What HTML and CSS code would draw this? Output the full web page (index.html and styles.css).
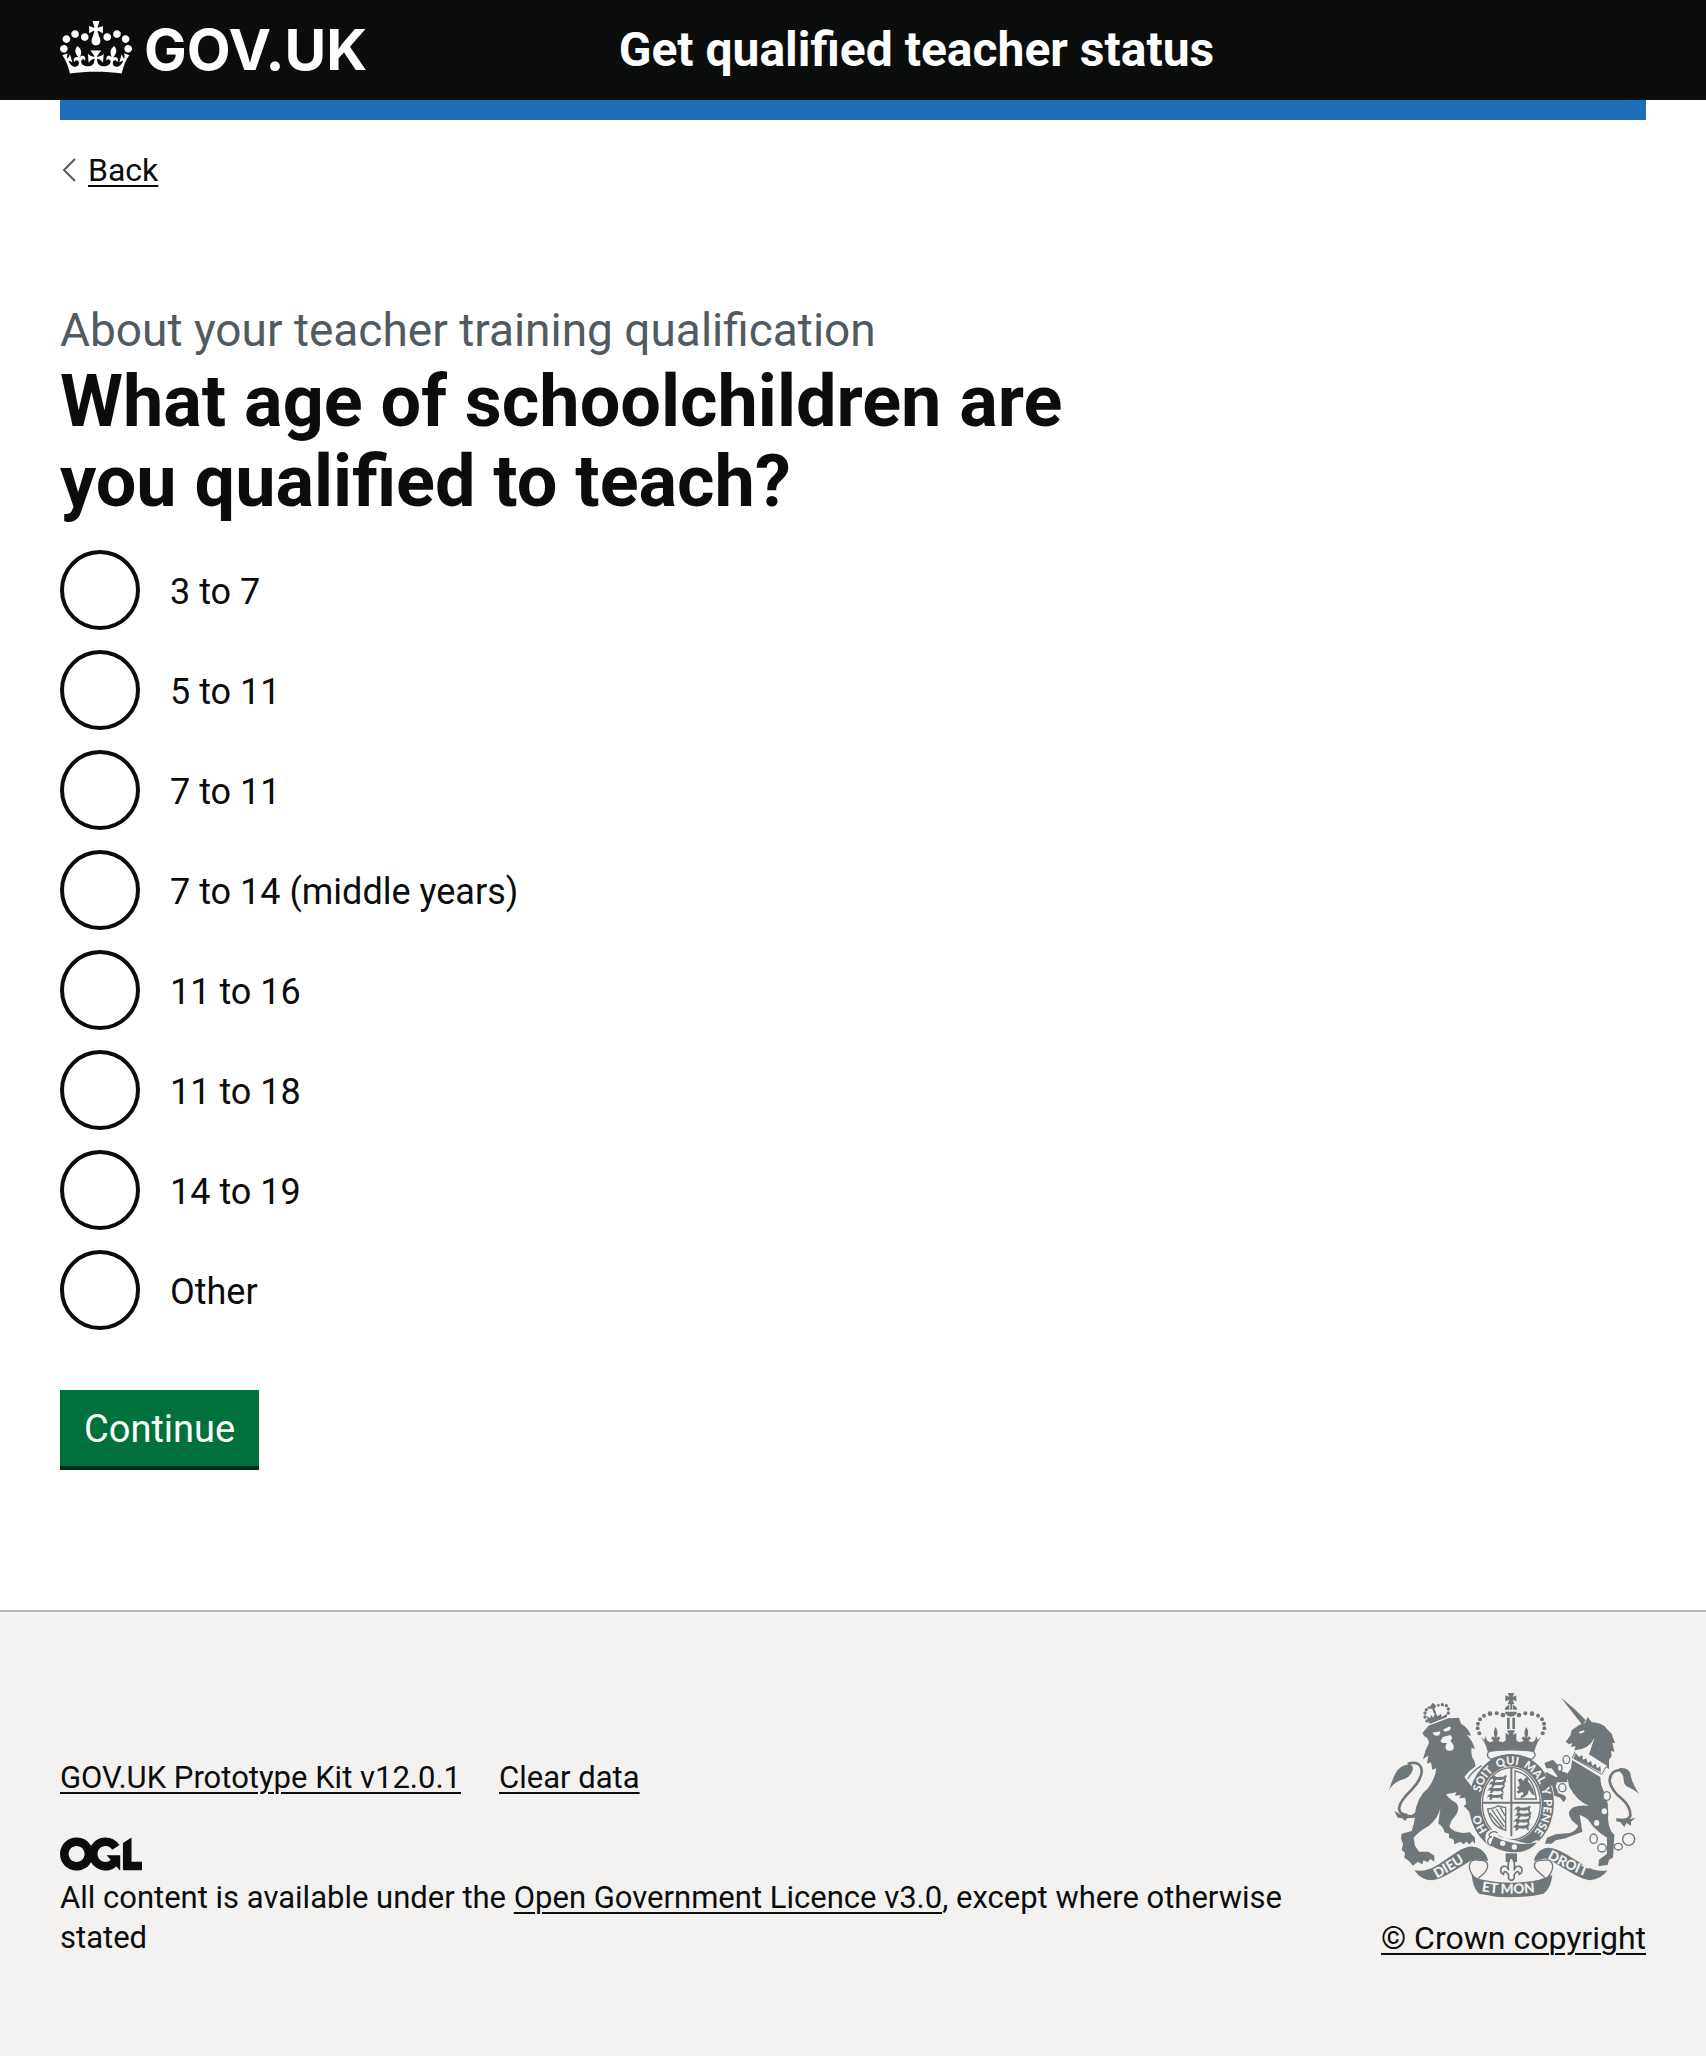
FILE: index.html
```html
<!DOCTYPE html>
<html lang="en">
<head>
<meta charset="utf-8">
<meta name="viewport" content="width=device-width, initial-scale=1">
<title>What age of schoolchildren are you qualified to teach? - Get qualified teacher status</title>
<link rel="stylesheet" href="styles.css">
</head>
<body>
<header class="header">
  <div class="header-row container">
    <a class="logo" href="#">
      <svg class="logo-crown" viewBox="0 0 132 97" aria-hidden="true"><path fill="currentColor" fill-rule="evenodd" d="M25 30.2c3.5 1.5 7.7-.2 9.1-3.7 1.5-3.6-.2-7.8-3.9-9.2-3.6-1.4-7.6.3-9.1 3.9-1.4 3.5.3 7.5 3.9 9zM9 39.5c3.6 1.5 7.8-.2 9.2-3.7 1.5-3.6-.2-7.8-3.9-9.1-3.6-1.5-7.6.2-9.1 3.8-1.4 3.5.3 7.5 3.8 9zM4.4 57.2c3.5 1.5 7.7-.2 9.1-3.8 1.5-3.6-.2-7.7-3.9-9.1-3.5-1.5-7.6.3-9.1 3.8-1.4 3.5.3 7.6 3.9 9.1zm38.3-21.4c3.5 1.5 7.7-.2 9.1-3.8 1.5-3.6-.2-7.7-3.9-9.1-3.6-1.5-7.6.3-9.1 3.8-1.3 3.6.4 7.7 3.9 9.1zm64.4-5.6c-3.6 1.5-7.8-.2-9.1-3.7-1.5-3.6.2-7.8 3.8-9.2 3.6-1.4 7.7.3 9.2 3.9 1.3 3.5-.4 7.5-3.9 9zm15.9 9.3c-3.6 1.5-7.7-.2-9.1-3.7-1.5-3.6.2-7.8 3.7-9.1 3.6-1.5 7.7.2 9.2 3.8 1.5 3.5-.3 7.5-3.8 9zm4.7 17.7c-3.6 1.5-7.8-.2-9.2-3.8-1.5-3.6.2-7.7 3.9-9.1 3.6-1.5 7.7.3 9.2 3.8 1.3 3.5-.4 7.6-3.9 9.1zM89.3 35.8c-3.6 1.5-7.8-.2-9.2-3.8-1.4-3.6.2-7.7 3.9-9.1 3.6-1.5 7.7.3 9.2 3.8 1.4 3.6-.3 7.7-3.9 9.1zM69.7 17.7l8.9 4.7V9.3l-8.9 2.8c-.2-.3-.5-.6-.9-.9L72.4 0H59.6l3.5 11.2c-.3.3-.6.5-.9.9l-8.8-2.8v13.1l8.8-4.7c.3.3.6.7.9.9l-5 15.4v.1c-.2.8-.4 1.6-.4 2.4 0 4.1 3.1 7.5 7 8.1h.2c.3 0 .7.1 1 .1.4 0 .7 0 1-.1h.2c4-.6 7.1-4.1 7.1-8.1 0-.8-.1-1.7-.4-2.4V34l-5.1-15.4c.4-.2.7-.6 1-.9zM66 92.8c16.9 0 32.8 1.1 47.1 3.2 4-16.9 8.9-26.7 14-33.5l-9.6-3.4c1 4.9 1.1 7.2 0 10.2-1.5-1.4-3-4.3-4.2-8.7L108.6 76c2.8-2 5-3.2 7.5-3.3-4.4 9.4-10 11.9-13.6 11.2-4.3-.8-6.3-4.6-5.6-7.9 1-4.7 5.7-5.9 8-.5 4.3-8.7-3-11.4-7.6-8.8 7.1-7.2 7.9-13.5 2.1-21.1-8 6.1-8.1 12.3-4.5 20.8-4.7-5.4-12.1-2.5-9.5 6.2 3.4-5.2 7.9-2 7.2 3.1-.6 4.3-6.4 7.8-13.5 7.2-10.3-.9-10.9-8-11.2-13.8 2.5-.5 7.1 1.8 11 7.3L80.2 60c-4.1 4.4-8 5.3-12.3 5.4 1.4-4.4 8-11.6 8-11.6H55.5s6.4 7.2 7.9 11.6c-4.2-.1-8-1-12.3-5.4l1.4 16.4c3.9-5.5 8.5-7.7 10.9-7.3-.3 5.8-.9 12.8-11.1 13.8-7.2.6-12.9-2.9-13.5-7.2-.7-5 3.8-8.3 7.1-3.1 2.7-8.7-4.6-11.6-9.4-6.2 3.7-8.5 3.6-14.7-4.6-20.8-5.8 7.6-5 13.9 2.2 21.1-4.7-2.6-11.9.1-7.7 8.8 2.3-5.5 7.1-4.2 8.1.5.7 3.3-1.3 7.1-5.7 7.9-3.5.7-9-1.8-13.5-11.2 2.5.1 4.7 1.3 7.5 3.3l-4.7-15.4c-1.2 4.4-2.7 7.2-4.3 8.7-1.1-3-.9-5.3 0-10.2l-9.5 3.4c5 6.9 9.9 16.7 14 33.5 14.8-2.1 30.8-3.2 47.7-3.2z"/></svg>
      <span class="logo-text">GOV.UK</span>
    </a>
    <a class="service-name" href="#">Get qualified teacher status</a>
  </div>
</header>
<div class="container"><div class="header-bar"></div></div>

<div class="container">
  <div class="back">
    <svg class="back-arrow" viewBox="0 0 14 24" aria-hidden="true"><path d="M13 1 2 12l11 11" fill="none" stroke="currentColor" stroke-width="2"/></svg>
    <a class="link" href="#">Back</a>
  </div>

  <main class="main">
    <form action="#" method="post">
      <fieldset class="fieldset">
        <legend class="legend">
          <span class="caption">About your teacher training qualification</span>
          <h1 class="heading">What age of schoolchildren are you qualified to teach?</h1>
        </legend>
        <div class="radios">
          <div class="radio"><input class="radio-input" type="radio" name="age" id="age-1" value="3-7"><label class="radio-label" for="age-1">3 to 7</label></div>
          <div class="radio"><input class="radio-input" type="radio" name="age" id="age-2" value="5-11"><label class="radio-label" for="age-2">5 to 11</label></div>
          <div class="radio"><input class="radio-input" type="radio" name="age" id="age-3" value="7-11"><label class="radio-label" for="age-3">7 to 11</label></div>
          <div class="radio"><input class="radio-input" type="radio" name="age" id="age-4" value="7-14"><label class="radio-label" for="age-4">7 to 14 (middle years)</label></div>
          <div class="radio"><input class="radio-input" type="radio" name="age" id="age-5" value="11-16"><label class="radio-label" for="age-5">11 to 16</label></div>
          <div class="radio"><input class="radio-input" type="radio" name="age" id="age-6" value="11-18"><label class="radio-label" for="age-6">11 to 18</label></div>
          <div class="radio"><input class="radio-input" type="radio" name="age" id="age-7" value="14-19"><label class="radio-label" for="age-7">14 to 19</label></div>
          <div class="radio"><input class="radio-input" type="radio" name="age" id="age-8" value="other"><label class="radio-label" for="age-8">Other</label></div>
        </div>
      </fieldset>
      <button class="button" type="submit">Continue</button>
    </form>
  </main>
</div>

<footer class="footer">
  <div class="footer-row container">
    <div class="footer-meta">
      <ul class="footer-links">
        <li><a class="link" href="#">GOV.UK Prototype Kit v12.0.1</a></li>
        <li><a class="link" href="#">Clear data</a></li>
      </ul>
      <svg class="ogl" viewBox="0 0 483.2 195.7" aria-hidden="true"><path fill="currentColor" d="M421.5 142.8V.1l-50.7 32.3v161.1h112.4v-50.7zm-122.3-9.6A47.12 47.12 0 0 1 221 97.8c0-26 21.1-47.1 47.1-47.1 16.7 0 31.4 8.7 39.7 21.8l42.7-27.2A97.63 97.63 0 0 0 268.1 0c-36.5 0-68.3 20.1-85.1 49.7A98 98 0 0 0 97.8 0C43.9 0 0 43.9 0 97.8s43.9 97.8 97.8 97.8c36.5 0 68.3-20.1 85.1-49.7a97.76 97.76 0 0 0 149.6 25.4l19.4 22.2h3v-87.8h-80l24.3 27.5zM97.8 145c-26 0-47.1-21.1-47.1-47.1s21.1-47.1 47.1-47.1 47.1 21.1 47.1 47.1S123.8 145 97.8 145"/></svg>
      <p class="licence">All content is available under the <a class="link" href="#">Open Government Licence v3.0</a>, except where otherwise stated</p>
    </div>
    <div class="copyright">
      <svg class="crest" viewBox="60 30 750 621" role="img" aria-label="Royal coat of arms">
        <defs>
          <path id="garter-line" d="M427 486A97 117 0 0 1 427 251A97 117 0 0 1 427 486"/>
          <path id="dieu-line" d="M203 592Q255 565 310 527"/>
          <path id="mon-line" d="M338 631Q426 646 530 629"/>
          <path id="droit-line" d="M534 532Q592 564 670 594"/>
          <g id="beast"><path d="M3 5l8-3 6 4 20-1 6-5 5 3-4 7 2 10-6-2-2-5-8 2-14-1-5 6-7 1 3-6-3-4-7 3z"/></g>
        </defs>

        <!-- crown -->
        <g class="crest-fill">
          <path d="M416 36h20l-5 12 11-5v18l-11-5 5 14h-20l5-14-12 5V43l12 5zM424 70h5v16h-5z"/>
          <path d="M421 72v14h-14q2-11 14-14zM431 72v14h14q-2-11-14-14zM408 92h36q-3 14-18 15-15-1-18-15z"/>
          <path d="M414 110h8v34h-8zM430 110h8v34h-8z"/>
          <circle cx="402" cy="102" r="7"/><circle cx="383" cy="97" r="6"/><circle cx="363" cy="98" r="7"/><circle cx="345" cy="104" r="6"/><circle cx="333" cy="115" r="6"/><circle cx="327" cy="128" r="6"/><circle cx="326" cy="142" r="6"/><circle cx="331" cy="157" r="6"/>
          <circle cx="450" cy="102" r="7"/><circle cx="469" cy="97" r="6"/><circle cx="489" cy="98" r="7"/><circle cx="507" cy="104" r="6"/><circle cx="519" cy="115" r="6"/><circle cx="525" cy="128" r="6"/><circle cx="526" cy="142" r="6"/><circle cx="521" cy="157" r="6"/>
          <path d="M334 168L346 176 350 166 354 178 362 184 374 180 366 172 372 166 378 172Q370 152 380 138 390 152 382 172L388 166 394 172 388 180 402 184 410 178 410 156 421 162 414 148H438L431 162 442 156 442 178 450 184 464 180 458 172 464 166 470 172Q462 152 472 138 482 152 474 172L480 166 486 172 478 180 490 184 498 178 502 166 506 176 518 168Q502 184 496 212 427 203 356 212 350 184 334 168Z"/>
        </g>
        <path class="crest-line" d="M362 210q64-9 128 0 10 5 8 13-2 8-11 12-60-25-121 0-10-5-11-13 1-8 7-12z"/>

        <!-- garter and shield -->
        <path class="crest-fill" fill-rule="evenodd" d="M427 219A128 148 0 0 1 427 515A128 148 0 0 1 427 219ZM427 256A91 112 0 0 0 427 480A91 112 0 0 0 427 256Z"/>
        <ellipse class="crest-line" cx="427" cy="368" rx="87" ry="108"/>
        <path class="crest-line crest-line-thick" d="M427 260v206M340 365h174"/>
        <g class="crest-fill">
          <use href="#beast" x="366" y="282"/><use href="#beast" x="362" y="298"/><use href="#beast" x="358" y="316"/><use href="#beast" x="356" y="336"/>
          <use href="#beast" x="438" y="374"/><use href="#beast" x="440" y="392"/><use href="#beast" x="436" y="410"/><use href="#beast" x="434" y="428"/>
          <path d="M446 296l10-4 8 8 4-10 12 2-4 8 8 10 8 14 6 20-10-6-8-12-4 14-10 8-12 4 2-8 8-4-4-8-12 6-6-6 8-4-6-10 8-4-2-10z"/>
        </g>
        <path class="crest-line" d="M438 270q56 10 64 84h-64z"/>
        <path class="crest-line" d="M356 384q20-2 30-9l24 5v68q-44-12-54-64zM368 386l38 52M382 384l26 40M394 380l14 24M362 396l40 48"/>
        <g class="crest-motto crest-motto-small">
          <text><textPath href="#garter-line" startOffset="84">HO</textPath></text>
          <text><textPath href="#garter-line" startOffset="203">SOIT</textPath></text>
          <text><textPath href="#garter-line" startOffset="295">QUI</textPath></text>
          <text><textPath href="#garter-line" startOffset="374">MAL</textPath></text>
          <text><textPath href="#garter-line" startOffset="460">Y</textPath></text>
          <text><textPath href="#garter-line" startOffset="493">PENSE</textPath></text>
        </g>
        <path class="crest-bare" d="M352 455q14-14 34-8-4 12 6 20l80 20q14 2 30-10l22 8q-40 42-96 38-44-2-70-32-14-10-6-36z"/>
        <path class="crest-fill" d="M374 466q70 34 130 18-24 32-76 30-34-2-64-22z"/>
        <path class="crest-line" d="M382 480a13 13 0 1 1-14-12q-14-4-4-12 10-8 22 0"/>
        <circle class="crest-bare" cx="401" cy="487" r="8"/><circle class="crest-bare" cx="436" cy="498" r="8"/>

        <!-- lion -->
        <path class="crest-line" d="M338 254Q312 268 296 294"/>
        <g class="crest-fill">
          <path d="M160 156L178 136 245 112 270 110 276 128Q298 140 306 164L294 162Q312 182 318 204L308 200Q304 224 316 240L320 256Q300 268 286 288L304 312Q326 340 332 380L338 392 328 396 316 390 314 396 304 388 302 394 290 380 284 376 292 368 288 350 270 352 276 342 258 344 262 334 232 340Q236 352 262 366Q276 384 256 408Q242 424 242 438 252 454 284 456L302 454 318 470 318 488 310 480 302 490 292 482 284 490 274 482 256 490 254 476 240 470 240 458 226 454Q224 436 208 428L214 382Q206 414 180 434Q148 452 134 470L138 494 150 512 178 512 196 524 196 542 184 534 176 544 164 538 160 550 146 542 132 554 120 540 106 530 108 516 98 506 102 490 96 472 98 458 128 450Q138 422 138 400Q142 350 178 320Q200 290 202 262L190 266 186 244 174 248 178 224 162 234Q168 206 180 186 178 170 166 166Z"/>
          <path d="M178 134L242 110 246 118 182 144Z"/>
          <path d="M180 126L173 106 184 112 186 102 194 110 198 94 206 106 216 98 218 108 234 98 234 108 184 128Z"/>
          <path d="M190 66l8 4 4 8-6 4 6 16-8-2-4-12-8-2 2-6z"/>
          <circle cx="168" cy="96" r="5"/><circle cx="172" cy="86" r="5"/><circle cx="180" cy="80" r="4"/><circle cx="168" cy="108" r="5"/><circle cx="174" cy="120" r="5"/><circle cx="208" cy="73" r="4"/><circle cx="220" cy="71" r="5"/><circle cx="232" cy="74" r="5"/><circle cx="238" cy="84" r="5"/><circle cx="238" cy="96" r="5"/>
          <path d="M60 328q8-28 18-48 10-26 44-30 14 6 8 20-8 22-36 28-22 8-34 30z"/>
          <path d="M76 390l18 10 34 2 14-10-4 18-24 2-6 8-8-8-14-2z"/>
        </g>
        <path class="crest-line crest-line-tail" d="M116 248q38-10 42 20 2 24-30 58-36 34-38 56 2 20 26 20"/>
        <path class="crest-bare" d="M190 155l24-4-3 12q-10 3-16-1zM222 146l20-10 4 4-4 8-14 4zM214 180l8-12 22-6 6 8-6 10q12 10 10 24-10 10-22 2-6-10 2-20l-14 0z"/>

        <!-- unicorn -->
        <g class="crest-fill">
          <path d="M576 50Q620 84 650 118L640 132Z"/>
          <path d="M590 182L604 164 608 148 630 132 648 126 656 108 668 124Q700 124 714 144L728 158 738 186 730 186 736 212 726 210 728 226 720 236 720 264 690 248 616 208 620 196 606 198 610 186 600 190Z"/>
          <path d="M610 232L696 282Q690 304 704 330L716 366 718 400Q714 424 726 450L736 462 734 500 732 530 720 536 716 552 688 556 690 536 714 518 714 470Q674 444 662 422Q652 408 632 402Q636 424 640 452L590 472 560 478 548 488 528 488 534 470 560 460 602 456Q622 448 628 434Q598 414 600 394Q606 370 660 374Q624 362 600 316L594 280 606 262Z"/>
          <path d="M526 246L552 236 570 256 568 268 594 276 598 296 570 292 548 262 532 262Z"/>
          <path d="M530 272L560 288 590 282 596 304 564 304 560 316 568 336 588 344 592 352 584 364 574 350 556 344 550 316 536 304Z"/>
          <path d="M750 262Q774 258 784 276Q786 302 810 338Q796 326 782 320Q764 314 764 296Q764 280 750 270Z"/>
          <path d="M740 412l44 2 16-4-14 12 0 12-14-8-6 12-10-12z"/>
        </g>
        <path class="crest-line crest-line-tail" d="M752 267Q722 270 722 301 726 327 760 355 786 379 784 405 774 423 742 417"/>
        <path class="crest-bare" d="M630 152l16-4 0 6-14 4zM616 208Q662 204 676 170Q678 206 660 220L716 252 700 292 608 236Z"/>
        <path class="crest-line crest-line-thin" d="M618 212l-8 18 88 50 14-24"/>
        <path class="crest-fill" d="M614 232L620 216 630 228 640 222 642 236 652 232 656 246 666 240 670 254 680 248 684 262 694 256 696 274Z"/>
        <path class="crest-fill" d="M660 220L680 160 724 200 716 256Z"/>
        <g class="crest-line">
          <ellipse cx="592" cy="236" rx="10" ry="12"/><ellipse cx="674" cy="473" rx="11" ry="14"/><ellipse cx="699" cy="501" rx="13" ry="12"/><ellipse cx="748" cy="497" rx="12" ry="10"/><circle cx="779" cy="475" r="18"/>
        </g>
        <g class="crest-ring"><ellipse cx="572" cy="261" rx="7" ry="10"/><ellipse cx="580" cy="320" rx="11" ry="12"/><ellipse cx="713" cy="345" rx="11" ry="13"/></g>
        <ellipse class="crest-bare" cx="706" cy="391" rx="8" ry="9"/><ellipse class="crest-bare" cx="683" cy="426" rx="8" ry="9"/>

        <!-- ribbon -->
        <g class="crest-fill">
          <path d="M136 568Q170 574 206 552L268 510Q308 486 334 504 352 516 358 540L330 536Q318 536 308 538L248 574Q216 594 190 598 156 598 136 568Z"/>
          <path d="M716 568Q684 574 650 556L592 520Q546 492 522 504 502 512 494 540L520 534Q532 530 544 538L604 574Q636 594 662 598 696 596 716 568Z"/>
          <path d="M308 582Q322 592 340 596 426 614 510 596 534 588 550 582 546 622 524 638 426 660 330 638 312 622 308 582Z"/>
        </g>
        <path class="crest-line" d="M326 600Q296 570 302 550 308 532 330 538 356 536 356 554 356 566 342 580L328 592M526 600Q556 570 550 550 544 532 522 538 496 536 496 554 498 566 510 574L528 590"/>
        <g class="crest-motto">
          <text><textPath href="#dieu-line">DIEU</textPath></text>
          <text><textPath href="#mon-line">ET MON</textPath></text>
          <text><textPath href="#droit-line">DROIT</textPath></text>
        </g>

        <!-- fleur-de-lis -->
        <path class="crest-fill" d="M410 517h34v26h-34z"/>
        <path class="crest-petal" d="M427 528q-14 16-8 40-4-14-16-12-12 6-6 20l6 4q2-12 10-6l6 8q-4 14 8 16 12-2 8-16l6-8q8-6 10 6l6-4q6-14-6-20-12-2-16 12 6-24-8-40z"/>
      </svg>
      <a class="link copyright-link" href="#">© Crown copyright</a>
    </div>
  </div>
</footer>
</body>
</html>
```

FILE: styles.css
```css
:root {
  --ink: #0b0c0c;
  --muted: #505a5f;
  --crest: #6f777b;
  --footer: #f3f2f1;
}

* { box-sizing: border-box; }

body {
  margin: 0;
  color: var(--ink);
  background: #fff;
  font-family: Roboto, "Liberation Sans", sans-serif;
  font-size: 36px;
  line-height: 50px;
}

.container { padding: 0 60px; }

/* Header */
.header { background: var(--ink); color: #fff; }
.header-row {
  display: grid;
  grid-template-columns: 1fr 2fr;
  align-items: center;
  min-height: 100px;
}
.logo {
  display: flex;
  align-items: center;
  gap: 12px;
  color: inherit;
  text-decoration: none;
}
.logo-crown { width: 72px; height: 53px; margin-bottom: 5px; }
.logo-text { font: bold 57px/60px Inter, sans-serif; }
.service-name {
  padding-left: 30px;
  color: inherit;
  font-size: 48px;
  font-weight: bold;
  line-height: 60px;
  text-decoration: none;
}
.header-bar { height: 20px; background: #1d70b8; }

/* Links */
.link {
  color: inherit;
  text-decoration: underline;
  text-decoration-thickness: 2px;
  text-underline-offset: 4px;
}

.back {
  display: flex;
  align-items: center;
  gap: 12px;
  margin: 30px 0;
  padding-left: 2px;
  font-size: 32px;
  line-height: 40px;
}
.back-arrow { width: 14px; height: 24px; color: var(--muted); }

/* Question */
.main { padding: 80px 0 144px; }
.fieldset { margin: 0; padding: 0; border: 0; }
.legend { width: 67%; padding: 0; margin-bottom: 28px; }
.caption {
  display: block;
  color: var(--muted);
  font-size: 46px;
  line-height: 60px;
}
.heading { margin: 2px 0 0; font-size: 72px; font-weight: bold; line-height: 80px; }

.radios { display: flex; flex-direction: column; gap: 20px; }
.radio { display: flex; align-items: center; gap: 30px; }
.radio-label { padding-top: 3px; }
.radio-input {
  appearance: none;
  width: 80px;
  height: 80px;
  margin: 0;
  border: 4px solid var(--ink);
  border-radius: 50%;
  background: #fff;
}
.radio-input:checked { background: radial-gradient(var(--ink) 20px, #fff 21px); }

.button {
  display: block;
  height: 76px;
  margin-top: 60px;
  padding: 2px 24px 0;
  border: 0;
  background: #00703c;
  box-shadow: 0 4px 0 #002d18;
  color: #fff;
  font: inherit;
  font-size: 38px;
}

/* Footer */
.footer {
  padding: 79px 0 99px;
  border-top: 2px solid #b1b4b6;
  background: var(--footer);
  font-size: 31px;
  line-height: 40px;
}
.footer-row { display: flex; align-items: flex-end; gap: 30px; }
.footer-meta { flex: 1; }
.footer-links {
  display: flex;
  gap: 38px;
  margin: 0 0 39px;
  padding: 0;
  list-style: none;
}
.ogl { display: block; width: 82px; height: 34px; margin-bottom: 7px; }
.licence { margin: 0; }
.copyright {
  display: flex;
  flex-direction: column;
  align-items: center;
  gap: 20px;
}
.copyright-link { font-size: 32px; }

/* Coat of arms */
.crest { width: 250px; height: 207px; }
.crest-fill { fill: var(--crest); }
.crest-bare { fill: var(--footer); }
.crest-line { fill: none; stroke: var(--crest); stroke-width: 4px; }
.crest-line-thin { stroke-width: 3px; }
.crest-line-thick { stroke-width: 6px; }
.crest-line-tail { stroke-width: 8px; }
.crest-ring { fill: var(--footer); stroke: var(--crest); stroke-width: 4px; }
.crest-petal { fill: var(--footer); stroke: var(--crest); stroke-width: 5px; }
.crest-motto { fill: var(--footer); font: 900 41px Lato, sans-serif; }
.crest-motto-small { font-size: 34px; }
```
